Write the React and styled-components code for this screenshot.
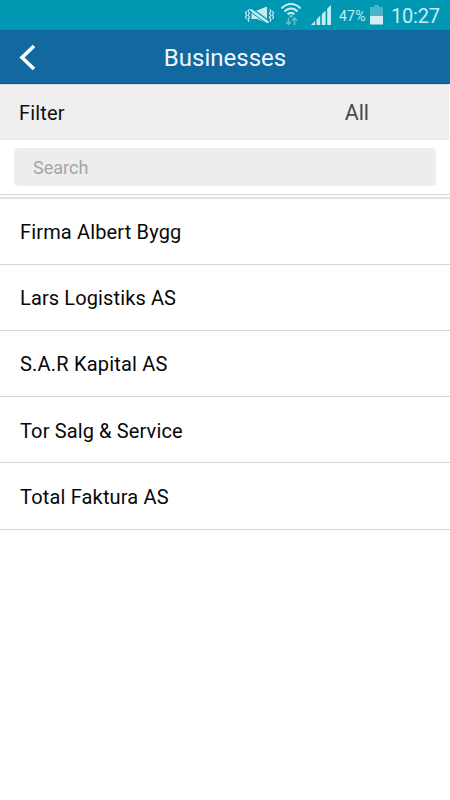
import React from 'react';
import styled, { createGlobalStyle } from 'styled-components';

const GlobalStyle = createGlobalStyle`
  * { box-sizing: border-box; }
  body { margin: 0; background: #fff; font-family: Roboto, "Liberation Sans", sans-serif; }
`;

const Screen = styled.main`
  width: 450px;
  height: 800px;
  overflow: hidden;
  background: #fff;
  display: flex;
  flex-direction: column;
`;

const StatusBar = styled.div`
  height: 30px;
  flex: none;
  background: #0097b3;
  display: flex;
  align-items: flex-start;
  color: #c5ecf2;
  padding-left: 244px;
`;

const StatusIcons = styled.svg`
  display: block;
  flex: none;
`;

const Percent = styled.span`
  width: 32px;
  flex: none;
  font-size: 14px;
  line-height: 16px;
  padding-top: 8px;
  padding-left: 1px;
  letter-spacing: 0.25px;
`;

const Clock = styled.time`
  margin-left: 7px;
  font-size: 20px;
  line-height: 24px;
  padding-top: 4px;
  letter-spacing: -0.2px;
  white-space: nowrap;
`;

const Header = styled.header`
  height: 54px;
  flex: none;
  background: #11699f;
  border-bottom: 1px solid #075b98;
  display: grid;
  grid-template-columns: 60px 1fr 60px;
  align-items: center;
`;

const BackButton = styled.button`
  height: 53px;
  padding: 0 0 0 18px;
  border: 0;
  background: none;
  display: flex;
  align-items: center;
`;

const Title = styled.h1`
  margin: 0;
  padding-top: 2px;
  text-align: center;
  font-size: 24px;
  line-height: 28px;
  font-weight: 400;
  color: #f0f5ff;
`;

const FilterRow = styled.div`
  height: 56px;
  flex: none;
  width: 449px;
  background: #efefef;
  border-top: 1px solid #d9dce0;
  border-bottom: 1px solid #e8e8e8;
  display: flex;
  align-items: center;
  justify-content: space-between;
  padding: 2px 80px 0 19px;
  font-size: 20px;
  line-height: 24px;
  letter-spacing: 0.15px;
  color: #111;
`;

const FilterValue = styled.span`
  font-size: 21.5px;
  letter-spacing: -0.1px;
  color: #4a4a4a;
`;

const SearchArea = styled.div`
  height: 55px;
  flex: none;
  padding: 8px 14px 0;
  border-bottom: 1px solid #d8d8d8;
`;

const SearchInput = styled.input`
  display: block;
  width: 422px;
  height: 38px;
  border: 0;
  outline: 0;
  border-radius: 4px;
  background: #ededed;
  padding: 0 19px;
  font: 400 18px Roboto, "Liberation Sans", sans-serif;
  &::placeholder { color: #a5a5a5; opacity: 1; }
`;

const List = styled.ul`
  list-style: none;
  margin: 2px 0 0;
  padding: 0;
  border-top: 2px solid #e4e4e4;
`;

const Row = styled.li`
  height: ${({ $height }) => $height}px;
  border-bottom: 1px solid #d6d6d6;
  display: flex;
  align-items: center;
  padding: ${({ $top }) => $top}px 20px 0;
  font-size: 20px;
  line-height: 24px;
  letter-spacing: ${({ $spacing }) => $spacing}px;
  color: #080808;
`;

const businesses = [
  { name: 'Firma Albert Bygg', height: 66, top: 0, spacing: 0.15 },
  { name: 'Lars Logistiks AS', height: 66, top: 0, spacing: 0.12 },
  { name: 'S.A.R Kapital AS', height: 66, top: 0, spacing: 0.2 },
  { name: 'Tor Salg & Service', height: 66, top: 2, spacing: 0.13 },
  { name: 'Total Faktura AS', height: 67, top: 1, spacing: 0.17 },
];

function VibrateWifiSignal() {
  return (
    <StatusIcons width="94" height="30" viewBox="244 0 94 30" fill="none" stroke="#c5ecf2">
      <path d="M246.500 11l-1 2 1 2-1 2 1 2M249.500 9l-1.500 2 1.500 2.200-1.500 2.200 1.500 2.200-1.500 2.200 1 2M269.500 9l1.500 2-1.500 2.200 1.500 2.200-1.500 2.200 1.500 2.200-1 2M272.500 11l1 2-1 2 1 2-1 2" strokeWidth="1.200" />
      <path d="M251.500 10.500h5.500L267 6.500V23L257 19h-5.500z" fill="#c5ecf2" stroke="none" />
      <path d="M251 8l18 12.800" stroke="#0097b3" strokeWidth="1.500" />
      <path d="M250.500 9.500l18 13" strokeWidth="2" />
      <path d="M250 11.500l18 13" stroke="#0097b3" strokeWidth="1" />
      <path d="M281.500 8.500C287 2.500 295 2.500 300.500 8.500M284.500 11.500C288 7.500 294 7.500 297.500 11.500M287.500 14.200Q291 11.500 294.500 14.200" strokeWidth="2" />
      <path d="M289.300 15.500h3.400L291 17.500z" fill="#c5ecf2" stroke="none" />
      <path d="M288.500 17.500v7M286 22l2.500 2.500L291 22M294.500 25v-7M292 20.500l2.500-2.500 2.500 2.500" strokeWidth="1.500" opacity=".5" />
      <path d="M311 25l4-4v4zM316.500 25v-5.500l3.700-3.700V25zM321.800 25V14.200l3.800-3.800V25zM327.200 25V8.800L331 5v20z" fill="#c5ecf2" stroke="none" />
    </StatusIcons>
  );
}

export default function App() {
  return (
    <>
      <GlobalStyle />
      <Screen>
        <StatusBar>
          <VibrateWifiSignal />
          <Percent>47%</Percent>
          <StatusIcons width="14" height="30" viewBox="370 0 14 30">
            <path d="M370 7h4V5h5v2h4v9h-13z" fill="#48b5c8" />
            <path d="M370 16h13v8.500h-13z" fill="#d0eef3" />
          </StatusIcons>
          <Clock>10:27</Clock>
        </StatusBar>
        <Header>
          <BackButton aria-label="Back">
            <svg width="20" height="28" viewBox="18 43 20 28" fill="none">
              <path d="M34 46L22 57.500L34 69" stroke="#fff" strokeWidth="3.600" />
            </svg>
          </BackButton>
          <Title>Businesses</Title>
        </Header>
        <FilterRow>
          <span>Filter</span>
          <FilterValue>All</FilterValue>
        </FilterRow>
        <SearchArea>
          <SearchInput placeholder="Search" aria-label="Search" />
        </SearchArea>
        <List>
          {businesses.map(({ name, height, top, spacing }) => (
            <Row key={name} $height={height} $top={top} $spacing={spacing}>{name}</Row>
          ))}
        </List>
      </Screen>
    </>
  );
}
